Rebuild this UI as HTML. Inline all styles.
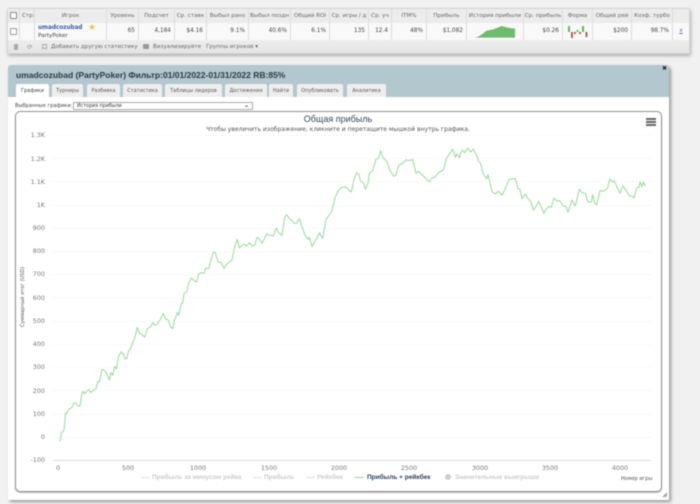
<!DOCTYPE html>
<html><head><meta charset="utf-8">
<style>
html,body{margin:0;padding:0;width:700px;height:504px;overflow:hidden;background:#f1f1f1}
body{font-family:"DejaVu Sans","Liberation Sans",sans-serif;position:relative;color:#555}
.a{position:absolute;white-space:nowrap}
#blur{position:absolute;left:0;top:0;width:700px;height:504px;filter:blur(.45px)}
.th{position:absolute;top:9px;height:14px;line-height:14px;font-size:5.6px;text-align:center;color:#666;overflow:hidden;background:#ececec;border-right:1px solid #dcdcdc;box-sizing:border-box;white-space:nowrap}
.td{position:absolute;top:23px;height:17px;line-height:17px;font-size:5.8px;text-align:right;padding-right:3px;color:#444;background:#f9f9f9;border-right:1px solid #dcdcdc;box-sizing:border-box;white-space:nowrap}
.tab{position:absolute;top:84px;height:13px;line-height:14px;background:#eee;font-size:5px;color:#555;text-align:center;border-radius:2px 2px 0 0;white-space:nowrap}
.yl{position:absolute;right:655px;font-size:6.4px;color:#777;line-height:8px;text-align:right;white-space:nowrap}
.xl{position:absolute;top:464px;width:40px;font-size:6.4px;color:#777;text-align:center;line-height:8px}
.lg{position:absolute;top:473px;font-size:6.5px;line-height:10px;color:#ccc;font-family:"Liberation Sans",sans-serif;font-weight:bold;white-space:nowrap}
.ln{position:absolute;top:477px;height:1px;width:9px;background:#ddd}
.tb{position:absolute;top:43px;font-size:5.6px;line-height:8px;color:#666}
</style></head><body><div id="blur">

<div class="a" style="left:7px;top:8px;width:683px;height:46px;background:#e4e4e4;border:1px solid #d4d4d4;box-sizing:border-box;border-radius:2px;box-shadow:1px 2px 3px #b0b0b0"></div>
<div class="a" style="left:8px;top:40px;width:681px;height:13px;background:linear-gradient(#eeeeee,#e4e4e4)"></div>

<div class="th" style="left:8px;width:12px"></div>
<div class="th" style="left:20px;width:15px;text-align:left;padding-left:2px">Стр:</div>
<div class="th" style="left:35px;width:72px">Игрок</div>
<div class="th" style="left:107px;width:32px">Уровень</div>
<div class="th" style="left:139px;width:36px">Подсчет</div>
<div class="th" style="left:175px;width:32px">Ср. ставк</div>
<div class="th" style="left:207px;width:42px">Выбыл рано</div>
<div class="th" style="left:249px;width:42px">Выбыл поздн</div>
<div class="th" style="left:291px;width:39px">Общий ROI</div>
<div class="th" style="left:330px;width:39px">Ср. игры / д</div>
<div class="th" style="left:369px;width:23px">Ср. уч</div>
<div class="th" style="left:392px;width:35px">ITM%</div>
<div class="th" style="left:427px;width:40px">Прибыль</div>
<div class="th" style="left:467px;width:57px">История прибыли</div>
<div class="th" style="left:524px;width:39px">Ср. прибыль</div>
<div class="th" style="left:563px;width:30px">Форма</div>
<div class="th" style="left:593px;width:39px">Общий рей</div>
<div class="th" style="left:632px;width:41px">Коэф. турбо</div>
<div class="th" style="left:673px;width:16px;border-right:0"></div>

<div class="td" style="left:8px;width:12px"></div>
<div class="td" style="left:20px;width:15px"></div>
<div class="td" style="left:35px;width:72px"></div>
<div class="td" style="left:107px;width:32px">65</div>
<div class="td" style="left:139px;width:36px">4,184</div>
<div class="td" style="left:175px;width:32px">$4.16</div>
<div class="td" style="left:207px;width:42px">9.1%</div>
<div class="td" style="left:249px;width:42px">40.6%</div>
<div class="td" style="left:291px;width:39px">6.1%</div>
<div class="td" style="left:330px;width:39px">135</div>
<div class="td" style="left:369px;width:23px">12.4</div>
<div class="td" style="left:392px;width:35px">48%</div>
<div class="td" style="left:427px;width:40px">$1,082</div>
<div class="td" style="left:467px;width:57px"></div>
<div class="td" style="left:524px;width:39px">$0.26</div>
<div class="td" style="left:563px;width:30px"></div>
<div class="td" style="left:593px;width:39px">$200</div>
<div class="td" style="left:632px;width:41px">98.7%</div>
<div class="td" style="left:673px;width:16px;border-right:0;text-align:center;padding:0;color:#5577bb;text-decoration:underline">x</div>

<div class="a" style="left:10px;top:12px;width:7px;height:7px;border:1px solid #888;box-sizing:border-box;background:#fff;border-radius:1px"></div>
<div class="a" style="left:10px;top:28px;width:7px;height:7px;border:1px solid #999;box-sizing:border-box;background:#fff;border-radius:1px"></div>
<div class="a" style="left:38px;top:24px;font-size:5.7px;font-weight:bold;color:#3a5ca8;line-height:8px">umadcozubad</div>
<div class="a" style="left:38px;top:32px;font-size:5.6px;color:#444;line-height:8px">PartyPoker</div>
<div class="a" style="left:88px;top:23px;font-size:9px;line-height:11px;color:#e6c25a">★</div>

<svg class="a" style="left:350px;top:0" width="200" height="45"><polyline transform="scale(.3333)" points="375,113 385,110 400,100 410,92 430,88 445,82 455,78 470,82 485,85 495,85 495,113" fill="#6dbb6d"/></svg>
<svg class="a" style="left:563px;top:24px" width="30" height="16">
<rect x="5" y="2" width="2" height="6" fill="#5fb85f"/><rect x="8" y="8" width="2" height="6" fill="#b85a5a"/><rect x="11" y="8" width="2" height="2" fill="#b85a5a"/><rect x="13.5" y="6" width="2" height="2" fill="#5fb85f"/><rect x="16" y="8" width="2" height="2" fill="#b85a5a"/><rect x="19" y="2" width="2" height="6" fill="#5fb85f"/><rect x="22.5" y="8" width="2" height="5" fill="#b85a5a"/>
</svg>

<div class="a" style="left:14px;top:44px;width:4px;height:6px;background:#aaa;border-radius:1px"></div>
<div class="a" style="left:27px;top:43px;font-size:6.5px;line-height:8px;color:#999">⟳</div>
<div class="a" style="left:42px;top:44px;width:5px;height:5px;border:1px solid #aaa;box-sizing:border-box"></div>
<div class="tb" style="left:51px">Добавить другую статистику</div>
<div class="a" style="left:143px;top:44px;width:6px;height:5px;background:#999;border-radius:1px"></div>
<div class="tb" style="left:153px">Визуализируйте</div>
<div class="tb" style="left:206px">Группы игроков ▾</div>

<div class="a" style="left:8px;top:65px;width:661px;height:435px;background:#fff;border-radius:3px 3px 0 0;box-shadow:2px 2px 3px #999"></div>
<div class="a" style="left:8px;top:65px;width:661px;height:32px;background:#b2c7ce;border-radius:3px 3px 0 0"></div>
<div class="a" style="left:16px;top:69px;font-family:'Liberation Sans',sans-serif;font-size:8.5px;font-weight:bold;color:#2a3a44;line-height:12px">umadcozubad (PartyPoker) Фильтр:01/01/2022-01/31/2022 RB:85%</div>
<div class="a" style="left:662px;top:65px;font-size:6px;line-height:8px;color:#222;font-weight:bold">✖</div>

<div class="tab" style="left:16px;width:33px;background:#fff;color:#444">Графики</div>
<div class="tab" style="left:52px;width:31px">Турниры</div>
<div class="tab" style="left:87px;width:33px">Разбивка</div>
<div class="tab" style="left:123px;width:39px">Статистика</div>
<div class="tab" style="left:165px;width:57px">Таблицы лидеров</div>
<div class="tab" style="left:225px;width:42px">Достижения</div>
<div class="tab" style="left:269px;width:24px">Найти</div>
<div class="tab" style="left:297px;width:46px">Опубликовать</div>
<div class="tab" style="left:347px;width:39px">Аналитика</div>

<div class="a" style="left:15px;top:102px;font-size:5.1px;line-height:8px;color:#444">Выбранные графики:</div>
<div class="a" style="left:73px;top:102px;width:180px;height:8px;border:1px solid #aaa;box-sizing:border-box;background:#fff;font-size:4.8px;line-height:7px;color:#333;padding-left:3px">История прибыли<span style="position:absolute;right:3px;top:-1px;font-weight:bold;font-size:6px">⌄</span></div>

<div class="a" style="left:15px;top:111px;width:647px;height:381px;border:1px solid #8f8f8f;box-sizing:border-box;border-radius:5px;box-shadow:0 1px 1px #bbb;background:#fff"></div>
<div class="a" style="left:338px;top:113px;width:0;font-family:'Liberation Sans',sans-serif"><div style="position:absolute;left:-100px;width:200px;text-align:center;font-size:9px;line-height:13px;color:#3a4658">Общая прибыль</div></div>
<div class="a" style="left:338px;top:126px;width:0"><div style="position:absolute;left:-180px;width:360px;text-align:center;font-size:6.05px;line-height:8px;color:#555">Чтобы увеличить изображение, кликните и перетащите мышкой внутрь графика.</div></div>
<div class="a" style="left:646px;top:118px;width:10px;height:2px;background:#666"></div>
<div class="a" style="left:646px;top:121px;width:10px;height:2px;background:#666"></div>
<div class="a" style="left:646px;top:124px;width:10px;height:2px;background:#666"></div>

<svg class="a" style="left:0;top:0" width="700" height="504">
<g stroke="#e8e8e8" stroke-width="1" stroke-dasharray="1 3">
<path d="M53 135.5H651M53 158.5H651M53 181.5H651M53 205.5H651M53 228.5H651M53 251.5H651M53 274.5H651M53 297.5H651M53 321.5H651M53 344.5H651M53 367.5H651M53 390.5H651M53 414.5H651M53 437.5H651"/>
</g>
<path d="M53 460.5H651" stroke="#d8dde8" fill="none"/>
<g fill="none" stroke="#98da98" stroke-width="1" stroke-linejoin="round">
<polyline vector-effect="non-scaling-stroke" transform="translate(0,320) scale(.3333)" points="178,362 181,362 184,338 190,334 193,325 196,280 199,282 205,270 210,266 216,262 222,248 228,250 234,258 240,258 246,220 250,214 254,222 260,214 266,208 272,218 280,210 288,206 294,184 298,186 306,148 314,152 322,164 328,180 333,158 338,166 344,140 349,146 356,108 364,96 370,102 376,118 380,116 386,92 392,86 396,72 404,56 412,22 418,40 426,44 434,52 442,26 452,20 458,8 464,16 472,12 480,0"/>
<polyline vector-effect="non-scaling-stroke" transform="translate(0,130) scale(.3333)" points="480,570 490,550 496,566 504,570"/>
<polyline vector-effect="non-scaling-stroke" transform="translate(0,320) scale(.3333)" points="505,0 510,18 518,26 524,0"/>
<polyline vector-effect="non-scaling-stroke" transform="translate(0,130) scale(.3333)" points="524,570 532,548 536,556 544,520 548,520 552,490 560,486 566,460 574,444 582,452 590,456 596,432 604,428 612,430 618,414 626,416 632,392 640,366 646,368 654,396 664,398 672,416 680,404 690,394"/>
<polyline vector-effect="non-scaling-stroke" transform="translate(230,130) scale(.3333)" points="0,394 6,390 14,350 22,328 28,354 40,342 50,348 58,338 66,348 74,346 82,322 90,330 96,340 110,312 120,316 130,318 138,294 146,308 156,316 164,262 170,254 178,266 186,272 194,280 200,280 208,266 216,290 226,318 234,328 238,322 246,350 254,336 262,322 268,308 278,326 288,268 296,258 306,242 316,200 326,180 336,172 346,170 354,178 364,186 372,150 380,128 386,132 392,154 400,158 406,178 414,160 418,130 428,122 438,88 446,84 452,62 460,84 470,94 480,120 490,138 498,136 506,106 518,100 528,90 540,92 548,88 558,130 566,124 574,132 584,142 598,156 606,144 614,142 628,126 640,120 650,84 660,70 668,58 676,82 680,72 690,84"/>
<polyline vector-effect="non-scaling-stroke" transform="translate(460,130) scale(.3333)" points="0,84 0,72 8,60 14,68 24,54 32,66 40,58 50,76 56,94 62,100 68,128 74,138 80,146 84,134 90,158 96,184 106,192 116,184 126,196 134,180 146,150 156,146 166,146 174,176 180,178 186,206 196,192 204,206 212,214 220,240 228,230 236,214 244,232 252,250 258,238 266,230 274,232 282,204 292,214 300,212 310,228 318,230 324,246 336,210 346,228 358,178 366,188 376,190 384,216 394,216 398,194 404,220 410,224 420,182 430,184 442,176 450,146 456,156 462,152 470,168 480,190 488,168 498,180 508,198 516,198 522,204 530,174 538,170 540,156 546,170 550,156 556,168"/>
</g>
<path d="M663 497l4-4M665 497l2-2" stroke="#888" stroke-width="1"/>
</svg>

<div class="yl" style="top:131px">1.3K</div>
<div class="yl" style="top:155px">1.2K</div>
<div class="yl" style="top:178px">1.1K</div>
<div class="yl" style="top:201px">1K</div>
<div class="yl" style="top:224px">900</div>
<div class="yl" style="top:247px">800</div>
<div class="yl" style="top:270px">700</div>
<div class="yl" style="top:294px">600</div>
<div class="yl" style="top:317px">500</div>
<div class="yl" style="top:340px">400</div>
<div class="yl" style="top:363px">300</div>
<div class="yl" style="top:387px">200</div>
<div class="yl" style="top:410px">100</div>
<div class="yl" style="top:433px">0</div>
<div class="yl" style="top:456px">-100</div>

<div class="xl" style="left:38px">0</div>
<div class="xl" style="left:108px">500</div>
<div class="xl" style="left:178px">1000</div>
<div class="xl" style="left:249px">1500</div>
<div class="xl" style="left:319px">2000</div>
<div class="xl" style="left:389px">2500</div>
<div class="xl" style="left:460px">3000</div>
<div class="xl" style="left:530px">3500</div>
<div class="xl" style="left:600px">4000</div>

<div class="a" style="left:22.5px;top:297px;width:0;height:0"><div style="position:absolute;left:-45px;top:-4px;width:90px;text-align:center;transform:rotate(-90deg);font-size:5px;line-height:8px;color:#555;white-space:nowrap">Суммарный итог (USD)</div></div>

<div class="ln" style="left:141px"></div><div class="lg" style="left:152px">Прибыль за минусом рейка</div>
<div class="ln" style="left:253px"></div><div class="lg" style="left:264px">Прибыль</div>
<div class="ln" style="left:306px"></div><div class="lg" style="left:317px">Рейкбек</div>
<div class="ln" style="left:355px;background:#8fd48f"></div><div class="lg" style="left:367px;color:#2c3e5c">Прибыль + рейкбек</div>
<div class="a" style="left:445px;top:474px;width:6px;height:6px;border-radius:50%;background:#ccc"></div><div class="lg" style="left:455px">Значительные выигрыши</div>
<div class="a" style="left:621px;top:476px;font-size:5px;line-height:7px;color:#555">Номер игры</div>
</div></body></html>
